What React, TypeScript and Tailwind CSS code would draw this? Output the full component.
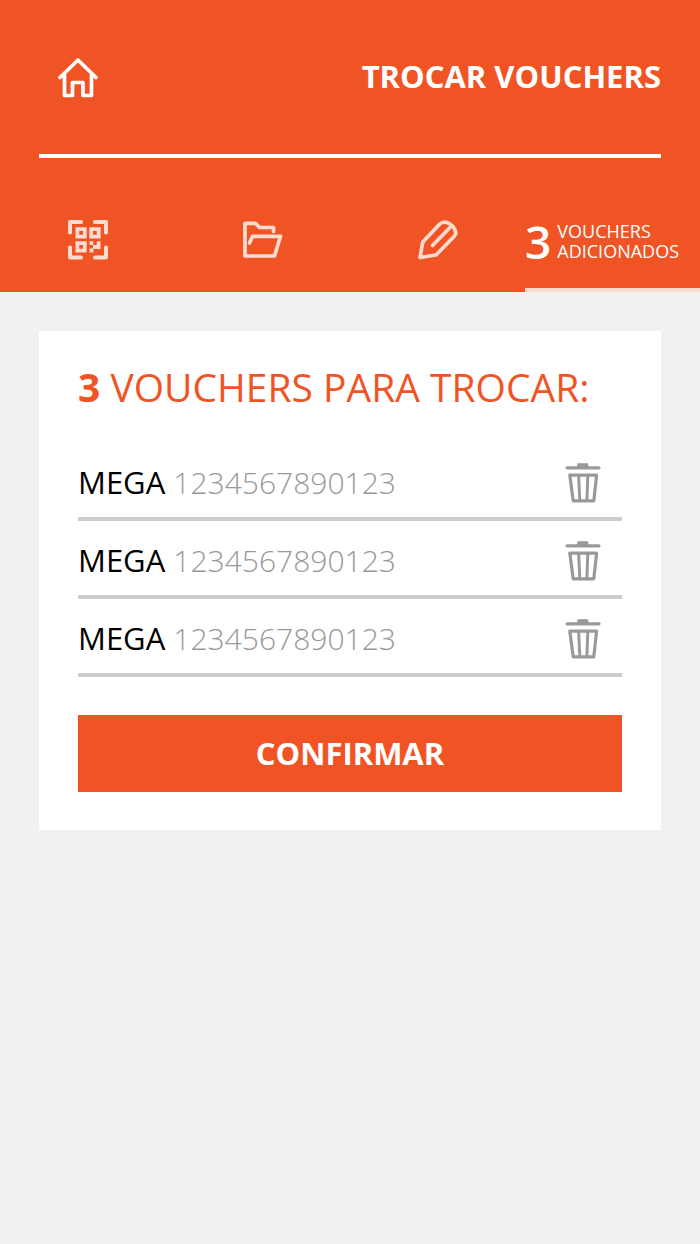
import React from "react";

interface IconProps {
  className?: string;
}

interface Voucher {
  id: number;
  brand: string;
  code: string;
}

const vouchers: Voucher[] = [
  { id: 1, brand: "MEGA", code: "1234567890123" },
  { id: 2, brand: "MEGA", code: "1234567890123" },
  { id: 3, brand: "MEGA", code: "1234567890123" },
];

const HomeIcon: React.FC<IconProps> = ({ className }) => (
  <svg className={className} viewBox="0 0 40 40" fill="none" stroke="currentColor" strokeWidth="3.7" strokeLinecap="round" strokeLinejoin="round" aria-hidden="true">
    <path d="M2 19.5L20 2L38 19.5" />
    <path d="M6.5 17V37.5H14.5V24.5H25V37.5H33.5V17" />
  </svg>
);

const QrIcon: React.FC<IconProps> = ({ className }) => (
  <svg className={className} viewBox="0 0 40 40" fill="none" aria-hidden="true">
    <path d="M2 12.5V2H13M27 2H38V12.5M38 27.5V37.5H27M13 37.5H2V27.5" stroke="currentColor" strokeWidth="4" strokeLinecap="round" strokeLinejoin="round" />
    <path fillRule="evenodd" fill="currentColor" d="M7.5 7.2H18.7V18.4H7.5ZM11.2 10.9V14.7H15V10.9ZM21.3 7.2H32.7V18.4H21.3ZM25 10.9V14.7H28.8V10.9ZM7.5 21.2H18.7V32.4H7.5ZM11.2 24.9V28.7H15V24.9Z" />
    <path fill="currentColor" d="M21.5 21.2H25.2V25H28.8V21.2H32.5V29H25.4V32.4H21.5V28.5H25V25H21.5Z" />
  </svg>
);

const FolderIcon: React.FC<IconProps> = ({ className }) => (
  <svg className={className} viewBox="0 0 40 40" fill="none" stroke="currentColor" strokeWidth="3.7" strokeLinecap="round" strokeLinejoin="round" aria-hidden="true">
    <path d="M30.5 11.5V7.5H16.5L12.5 3.3H2V36H31.5L37.5 16.3H9.5L6.5 23" />
  </svg>
);

const PencilIcon: React.FC<IconProps> = ({ className }) => (
  <svg className={className} viewBox="0 0 40 40" fill="none" stroke="currentColor" strokeWidth="3.7" strokeLinecap="round" strokeLinejoin="round" aria-hidden="true">
    <path d="M2 37.5L4.8 22L21.8 4Q25.5 0.5 30.5 3.2Q36.5 6.5 37.8 12.5Q37.8 14.5 36.5 16L18 35Z" />
    <path d="M14.5 25.5L31.5 8" />
  </svg>
);

const TrashIcon: React.FC<IconProps> = ({ className }) => (
  <svg className={className} viewBox="0 0 36 40" fill="none" stroke="currentColor" aria-hidden="true">
    <path d="M2 4.8H34" strokeWidth="3.2" strokeLinecap="round" />
    <path d="M12.5 4V1.5Q12.5 0.5 13.5 0.5H22Q23 0.5 23 1.5V4Z" fill="currentColor" strokeWidth="0.6" />
    <path d="M4.8 12.2H31.6L28.8 37.8H8.2Z" strokeWidth="3.2" strokeLinejoin="round" />
    <path d="M13.6 12L14.8 37.5M22.8 12L21.9 37.5" strokeWidth="3" />
  </svg>
);

const tabs = [
  { label: "Ler código QR", Icon: QrIcon },
  { label: "Abrir ficheiro", Icon: FolderIcon },
  { label: "Inserir código", Icon: PencilIcon },
];

const Header: React.FC = () => (
  <header className="bg-[#f05424] text-white">
    <div className="mx-[39px] flex h-[158px] items-center justify-between border-b-4 border-white pl-[19px]">
      <a href="#home" aria-label="Início" className="pt-0.5">
        <HomeIcon className="size-10" />
      </a>
      <h1 className="pb-0.5 text-[31px] leading-10 font-bold">TROCAR VOUCHERS</h1>
    </div>
    <nav className="grid h-[134px] grid-cols-4 pt-[34px]">
      {tabs.map(({ label, Icon }) => (
        <button key={label} type="button" aria-label={label} className="flex items-center justify-center pb-1 text-[#fddccf]">
          <Icon className="size-10" />
        </button>
      ))}
      <button type="button" className="flex items-center gap-1.5 border-b-4 border-[#fddccf] pt-0.5 text-left">
        <span className="text-[46px] leading-none font-semibold">{vouchers.length}</span>
        <span className="text-[18px] leading-5">
          VOUCHERS
          <br />
          ADICIONADOS
        </span>
      </button>
    </nav>
  </header>
);

const VoucherRow: React.FC<{ voucher: Voucher }> = ({ voucher }) => (
  <li className="flex h-[78px] items-center justify-between border-b-4 border-[#cccccc] pt-1 pr-[21px]">
    <p className="text-[31px] leading-10 text-black">
      {voucher.brand} <span className="text-[30px] font-light text-[#999999]">{voucher.code}</span>
    </p>
    <button type="button" aria-label="Remover voucher" className="pt-0.5 text-[#999999]">
      <TrashIcon className="h-10 w-9" />
    </button>
  </li>
);

export default function App() {
  return (
    <div className="min-h-screen bg-[#f1f1f1] font-['Open_Sans',sans-serif]">
      <Header />
      <main className="p-[39px]">
        <section className="bg-white px-[39px] pt-8 pb-[38px]">
          <h2 className="text-[39px] leading-[48px] text-[#f05424]">
            <strong className="font-bold">{vouchers.length}</strong> VOUCHERS PARA TROCAR:
          </h2>
          <ul className="mt-8">
            {vouchers.map((voucher) => (
              <VoucherRow key={voucher.id} voucher={voucher} />
            ))}
          </ul>
          <button type="button" className="mt-[38px] h-[77px] w-full bg-[#f05424] text-[31px] font-bold text-white">
            CONFIRMAR
          </button>
        </section>
      </main>
    </div>
  );
}
